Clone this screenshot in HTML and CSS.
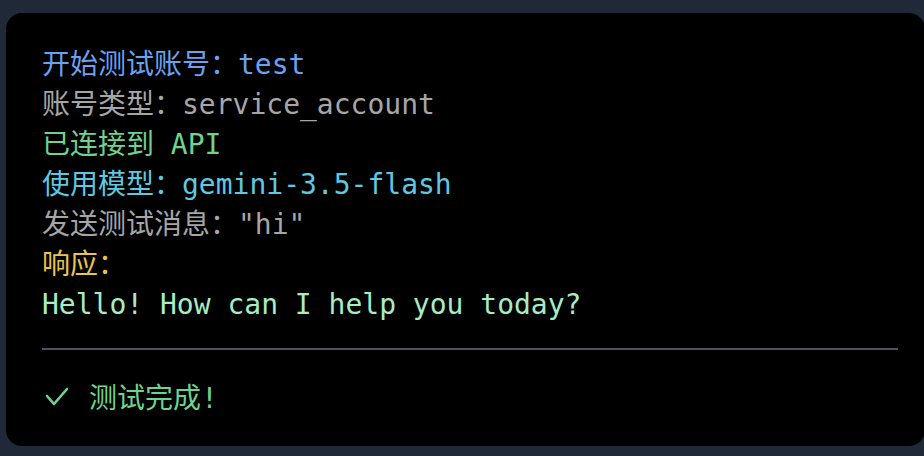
FILE: index.html
```html
<!DOCTYPE html>
<html lang="zh-CN">
<head>
<meta charset="utf-8">
<link rel="stylesheet" href="styles.css">
</head>
<body>
<div class="panel">
  <div class="log">
    <div class="line blue">开始测试账号：test</div>
    <div class="line gray">账号类型：service_account</div>
    <div class="line green">已连接到 API</div>
    <div class="line cyan">使用模型：gemini-3.5-flash</div>
    <div class="line gray">发送测试消息："hi"</div>
    <div class="line yellow">响应：</div>
    <div class="line mint">Hello! How can I help you today?</div>
  </div>
  <div class="divider"></div>
  <div class="done">
    <svg class="check" width="24" height="20" viewBox="0 0 24 20"><polyline points="2,9 9,17 22,2" fill="none" stroke="#6ed38c" stroke-width="2.6" stroke-linecap="round" stroke-linejoin="round"/></svg>
    <span>测试完成!</span>
  </div>
</div>
</body>
</html>
```
FILE: styles.css
```css
html, body {
  margin: 0;
  padding: 0;
  background: #1f2937;
  overflow: hidden;
}
body {
  width: 924px;
  height: 456px;
  font-family: "DejaVu Sans Mono", "Noto Sans CJK SC", monospace;
  font-size: 28px;
}
.panel {
  margin: 13px 0 0 6px;
  width: 919px;
  height: 433px;
  box-sizing: border-box;
  background: #000;
  border-radius: 16px;
  padding: 32px 27px 0 36px;
}
.line {
  line-height: 40px;
  white-space: pre;
}
.blue { color: #6aa2f2; }
.gray { color: #a6a6a6; }
.green { color: #6ed38c; }
.cyan { color: #5ec8e0; }
.yellow { color: #eac54b; }
.mint { color: #a8ecc0; }
.divider {
  height: 2px;
  background: #4b5260;
  margin: 23px 0 26px;
}
.done {
  display: flex;
  align-items: center;
  gap: 20px;
  height: 40px;
  color: #6ed38c;
  padding-left: 3px;
}
.check { display: block; margin-top: 1px; }
```
